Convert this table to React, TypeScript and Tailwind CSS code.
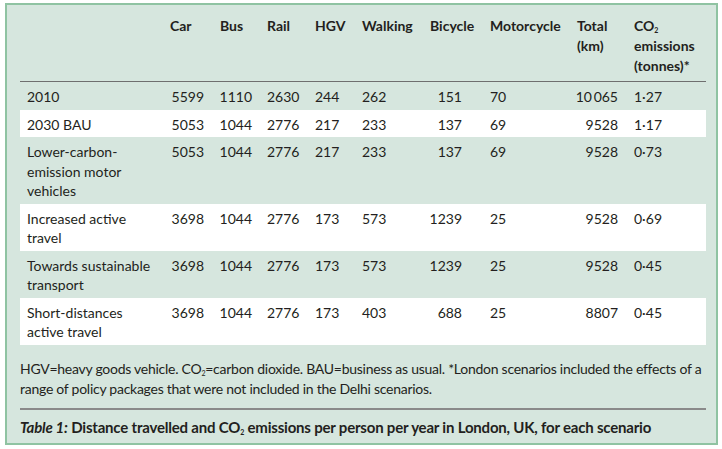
import React from "react";

const font = { fontFamily: "Lato, 'Open Sans', sans-serif" };

type Row = { label: string[]; v: string[]; bg: string };

const rows: Row[] = [
  { label: ["2010"], v: ["5599", "1110", "2630", "244", "262", "151", "70", "10\u2009065", "1·27"], bg: "" },
  { label: ["2030 BAU"], v: ["5053", "1044", "2776", "217", "233", "137", "69", "9528", "1·17"], bg: "bg-white" },
  { label: ["Lower-carbon-", "emission motor", "vehicles"], v: ["5053", "1044", "2776", "217", "233", "137", "69", "9528", "0·73"], bg: "" },
  { label: ["Increased active", "travel"], v: ["3698", "1044", "2776", "173", "573", "1239", "25", "9528", "0·69"], bg: "bg-white" },
  { label: ["Towards sustainable", "transport"], v: ["3698", "1044", "2776", "173", "573", "1239", "25", "9528", "0·45"], bg: "" },
  { label: ["Short-distances", "active travel"], v: ["3698", "1044", "2776", "173", "403", "688", "25", "8807", "0·45"], bg: "bg-white" },
];

const grid = "grid grid-cols-[145px_50px_47px_48px_47px_68px_60px_87px_57px_76px]";

const valueCls = [
  "text-right pr-[11px]",
  "text-right pr-[10px]",
  "pl-[5px]",
  "pl-[5px]",
  "pl-[5px]",
  "text-right pr-[23px]",
  "pl-[5px]",
  "text-right pr-[11px]",
  "pl-[5px]",
];

function Sub() {
  return <span className="inline-block text-[7px] leading-none align-[-2px]">2</span>;
}

export default function App() {
  return (
    <div className="w-[722px] h-[449px] bg-white pt-[3px] pl-[5px]" style={font}>
      <div className="w-[713px] h-[442px] border-2 border-[#8fc3a2] bg-[#d6e6de] pl-[13px] pr-[10px] pt-[11px] text-[#231f20] text-[14px] leading-[19.5px]">
        <div className={`${grid} font-bold border-b border-[#6f6f6f] pb-[5px] leading-[20px]`}>
          <div></div>
          <div className="pl-[5px]">Car</div>
          <div className="pl-[5px]">Bus</div>
          <div className="pl-[5px]">Rail</div>
          <div className="pl-[5px]">HGV</div>
          <div className="pl-[5px]">Walking</div>
          <div className="pl-[5px]">Bicycle</div>
          <div className="pl-[5px]">Motorcycle</div>
          <div className="pl-[5px]">
            Total
            <br />
            (km)
          </div>
          <div className="pl-[5px]">
            CO<Sub />
            <br />
            emissions
            <br />
            (tonnes)*
          </div>
        </div>
        {rows.map((r, i) => (
          <div key={i} className={`${grid} ${r.bg} pt-[5px] pb-[3px]`}>
            <div className="pl-[7px]">
              {r.label.map((l, j) => (
                <div key={j}>{l}</div>
              ))}
            </div>
            {r.v.map((v, j) => (
              <div key={j} className={valueCls[j]}>
                {v}
              </div>
            ))}
          </div>
        ))}
        <div className="mt-[14px] text-[14px] leading-[20px] tracking-[-0.26px] whitespace-nowrap">
          HGV=heavy goods vehicle. CO<Sub />=carbon dioxide. BAU=business as usual. *London scenarios included the effects of a
          <br />
          range of policy packages that were not included in the Delhi scenarios.
        </div>
        <div className="mt-[9px] h-[2px] bg-[#8a8a8a]"></div>
        <div className="mt-[7px] font-bold text-[15px] leading-[20px] tracking-[-0.2px] whitespace-nowrap">
          <span className="italic">Table 1:</span> Distance travelled and CO<Sub /> emissions per person per year in London, UK, for each scenario
        </div>
      </div>
    </div>
  );
}
